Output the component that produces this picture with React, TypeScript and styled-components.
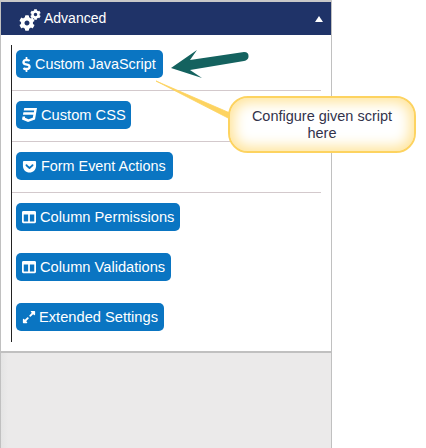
import React from "react";
import styled, { createGlobalStyle } from "styled-components";
import { FaCog, FaDollarSign, FaCss3, FaGetPocket, FaColumns, FaExpandAlt } from "react-icons/fa";

const Global = createGlobalStyle`
  html, body { margin: 0; padding: 0; background: #fff; }
  body { font-family: "Liberation Sans", Arial, sans-serif; }
`;

const Page = styled.div`
  position: relative;
  width: 426px;
  height: 448px;
  overflow: hidden;
`;

const Panel = styled.div`
  box-sizing: border-box;
  width: 332px;
  height: 448px;
  border-top: 2px solid #c8c8c8;
  border-left: 1px solid #c0c0c0;
  border-right: 1px solid #c0c0c0;
  display: flex;
  flex-direction: column;
`;

const Header = styled.div`
  height: 33px;
  flex: none;
  background: #1f3368;
  color: #fff;
  display: flex;
  align-items: center;
  padding: 0 8px 0 17px;
  font-size: 14px;
  gap: 3px;
`;

const Gears = styled.span`
  position: relative;
  width: 23px;
  height: 22px;
  flex: none;
  top: 1px;
  svg { position: absolute; }
  svg:first-child { left: 1px; bottom: 0; }
  svg:last-child { right: 0; top: 0; }
`;

const HeaderTitle = styled.span`
  flex: 1;
  position: relative;
  top: -1px;
`;

const Caret = styled.span`
  width: 0;
  height: 0;
  border-left: 4px solid transparent;
  border-right: 4px solid transparent;
  border-bottom: 6px solid #fff;
`;

const Body = styled.div`
  height: 318px;
  flex: none;
  background: #fff;
  box-sizing: border-box;
  padding: 10px 0 0 10px;
  border-bottom: 2px solid #c0c0c0;
`;

const Tree = styled.div`
  box-sizing: border-box;
  height: 297px;
  border-left: 1px solid #222;
  display: flex;
  flex-direction: column;
`;

const Row = styled.div<{ $h: number; $top: number; $rule?: boolean }>`
  box-sizing: border-box;
  height: ${(p) => p.$h}px;
  padding: ${(p) => p.$top}px 0 0 4px;
  margin-right: 10px;
  border-bottom: ${(p) => (p.$rule ? "1px solid #d3c9cc" : "none")};
`;

const Button = styled.div<{ $w: number; $gap: number; $pad?: number; $fs?: number }>`
  box-sizing: border-box;
  width: ${(p) => p.$w}px;
  height: 28px;
  background: #0a75c2;
  border-radius: 5px;
  color: #fff;
  font-size: ${(p) => p.$fs ?? 14.67}px;
  white-space: nowrap;
  display: flex;
  align-items: center;
  padding-left: ${(p) => p.$pad ?? 6}px;
  gap: ${(p) => p.$gap}px;
  svg { flex: none; }
`;

const Footer = styled.div`
  flex: 1;
  background: linear-gradient(90deg, #e4e4e4 0, #ebeaea 7px);
`;

const Overlay = styled.svg`
  position: absolute;
  left: 0;
  top: 0;
  pointer-events: none;
`;

const Callout = styled.div`
  position: absolute;
  left: 228px;
  top: 96px;
  box-sizing: border-box;
  width: 188px;
  height: 57px;
  border: 2px solid #fdd360;
  border-radius: 20px;
  background: #fff;
  box-shadow: inset 0 0 14px 4px #ffe396;
  display: flex;
  align-items: center;
  justify-content: center;
  text-align: center;
  padding: 0 16px;
  color: #33334a;
  font-size: 14.5px;
  line-height: 17px;
`;

export default function App() {
  return (
    <Page>
      <Global />
      <Panel>
        <Header>
          <Gears>
            <FaCog size={16} />
            <FaCog size={11} />
          </Gears>
          <HeaderTitle>Advanced</HeaderTitle>
          <Caret />
        </Header>
        <Body>
          <Tree>
            <Row $h={46} $top={5} $rule>
              <Button $w={147} $gap={1} $pad={3} $fs={14.4}><FaDollarSign size={15} />Custom JavaScript</Button>
            </Row>
            <Row $h={51} $top={10} $rule>
              <Button $w={115} $gap={3}><FaCss3 size={16} />Custom CSS</Button>
            </Row>
            <Row $h={51} $top={10} $rule>
              <Button $w={157} $gap={4} $fs={14.4}><FaGetPocket size={15} />Form Event Actions</Button>
            </Row>
            <Row $h={50} $top={10}>
              <Button $w={164} $gap={4}><FaColumns size={14} />Column Permissions</Button>
            </Row>
            <Row $h={50} $top={10}>
              <Button $w={155} $gap={4}><FaColumns size={14} />Column Validations</Button>
            </Row>
            <Row $h={49} $top={10}>
              <Button $w={148} $gap={3}><FaExpandAlt size={14} />Extended Settings</Button>
            </Row>
          </Tree>
        </Body>
        <Footer />
      </Panel>
      <Overlay width="426" height="448" viewBox="0 0 426 448">
        <path d="M156 81 L230 113 L230 119 Z" fill="#fdd360" stroke="#fdd360" strokeWidth="0.8" />
        <path d="M171 68 L197 50 L190 60 L244 52 Q249 52 248.5 57 Q248 60 244 61 L190 70 L202 78 Z" fill="#14625f" />
      </Overlay>
      <Callout>Configure given script here</Callout>
    </Page>
  );
}
